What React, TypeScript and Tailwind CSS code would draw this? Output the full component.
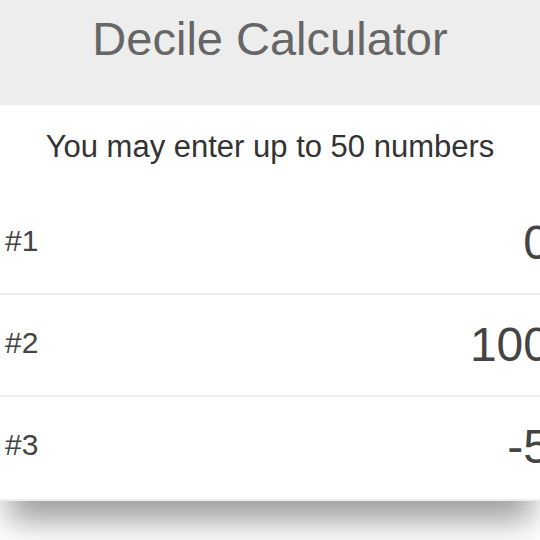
import { useState } from "react";

type Entry = { id: number; value: string };

const START: Entry[] = [
  { id: 1, value: "0" },
  { id: 2, value: "100" },
  { id: 3, value: "-5" },
];

export default function App() {
  const [entries, setEntries] = useState<Entry[]>(START);

  const update = (id: number, value: string) =>
    setEntries((list) => list.map((e) => (e.id === id ? { ...e, value } : e)));

  return (
    <div className="w-[540px] h-[540px] overflow-hidden bg-white font-['Liberation_Sans',Arial,sans-serif]">
      <header className="h-[105px] bg-[#ededed] pt-[15px] text-center">
        <h1 className="text-[47px] leading-[48px] text-[#666]">Decile Calculator</h1>
      </header>

      <p className="pt-[26px] h-[88px] text-center text-[31px] leading-[32px] text-[#333]">
        You may enter up to 50 numbers
      </p>

      <div className="w-[540px] shadow-[0_28px_30px_-8px_rgba(0,0,0,0.38)]">
        {entries.map((e) => (
          <label
            key={e.id}
            className="flex items-center h-[102px] border-b-2 border-[#eeeeee] pl-[5px] pr-0 last:pb-[2px] last:h-[104px]"
          >
            <span className="w-[80px] shrink-0 mb-[6px] text-[30px] text-[#444]">#{e.id}</span>
            <input
              value={e.value}
              onChange={(ev) => update(e.id, ev.target.value)}
              className="w-[465px] shrink-0 bg-transparent text-right text-[48px] text-[#444] outline-none"
            />
          </label>
        ))}
      </div>
    </div>
  );
}
